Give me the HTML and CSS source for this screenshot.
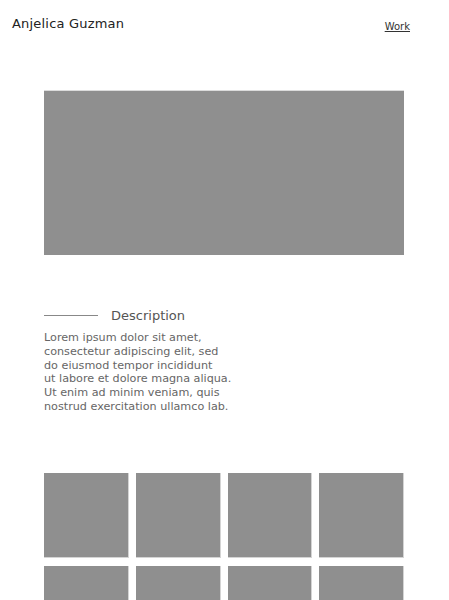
FILE: index.html
```html
<!DOCTYPE html>
<html lang="en">
<head>
    <meta charset="UTF-8">
    <meta name="viewport" content="width=device-width, initial-scale=1.0">
    <title>Anjelica Guzman</title>
    <link rel="stylesheet" href="styles.css">
</head>
<body>
    <div class="header">
        <div class="name">Anjelica Guzman</div>
        <a class="nav-link" href="#">Work</a>
    </div>
    <div class="container">
        <div class="hero"></div>
        <div class="description">
            <div class="desc-title">
                <span class="rule"></span>
                <span>Description</span>
            </div>
            <p class="desc-text">Lorem ipsum dolor sit amet,<br>consectetur adipiscing elit, sed<br>do eiusmod tempor incididunt<br>ut labore et dolore magna aliqua.<br>Ut enim ad minim veniam, quis<br>nostrud exercitation ullamco lab.</p>
        </div>
        <div class="gallery">
            <div class="tile"></div>
            <div class="tile"></div>
            <div class="tile"></div>
            <div class="tile"></div>
            <div class="tile"></div>
            <div class="tile"></div>
            <div class="tile"></div>
            <div class="tile"></div>
        </div>
    </div>
</body>
</html>
```
FILE: styles.css
```css
html, body {
    margin: 0;
    padding: 0;
}
body {
    font-family: "DejaVu Sans", Arial, sans-serif;
    background-color: #fff;
    color: #222;
    overflow: hidden;
}
.header {
    display: flex;
    justify-content: space-between;
    align-items: flex-start;
    padding: 16px 39px 0 12px;
    height: 75px;
    box-sizing: border-box;
}
.name {
    font-size: 13px;
    letter-spacing: 0.2px;
}
.nav-link {
    font-size: 10px;
    color: #333;
    margin-top: 5px;
}
.container {
    width: 360px;
    margin: 15px 0 0 44px;
}
.hero {
    height: 164px;
    background-color: #8f8f8f;
    border-top: 1px solid #dcdcdc;
}
.description {
    margin-top: 53px;
}
.desc-title {
    display: flex;
    align-items: center;
    font-size: 13px;
    color: #555;
}
.rule {
    width: 54px;
    height: 1px;
    background-color: #888;
    margin-right: 13px;
}
.desc-text {
    margin: 8px 0 0;
    font-size: 11.2px;
    line-height: 13.8px;
    color: #666;
}
.gallery {
    display: grid;
    grid-template-columns: repeat(4, 1fr);
    gap: 8px 7px;
    margin-top: 59px;
}
.tile {
    height: 84px;
    background-color: #8f8f8f;
    border: 1px solid #d4d4d4;
    border-left: none;
    border-top: none;
}
```
